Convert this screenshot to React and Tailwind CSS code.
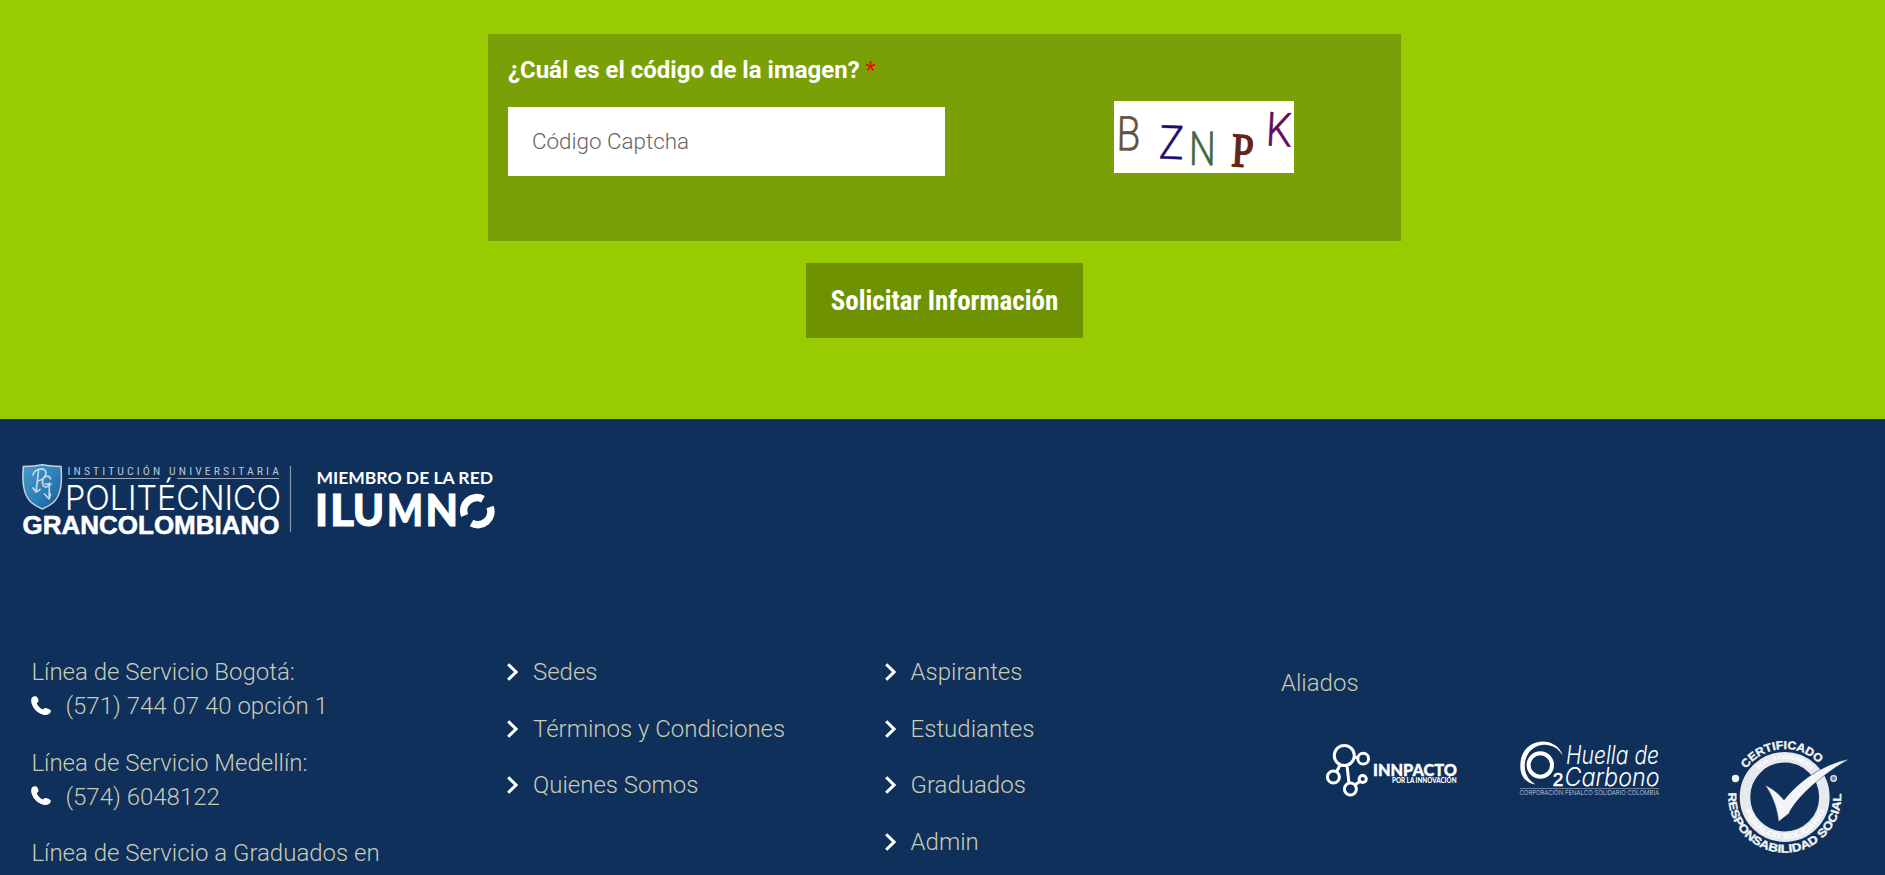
const serviceLines = [
  { title: "Línea de Servicio Bogotá:", phone: "(571) 744 07 40 opción 1" },
  { title: "Línea de Servicio Medellín:", phone: "(574) 6048122" },
  { title: "Línea de Servicio a Graduados en" },
];

const siteLinks = ["Sedes", "Términos y Condiciones", "Quienes Somos"];
const audienceLinks = ["Aspirantes", "Estudiantes", "Graduados", "Admin"];

function PhoneIcon() {
  return (
    <svg className="h-[19px] w-5 shrink-0 -translate-y-px overflow-visible" viewBox="0 0 20 19" fill="#fff">
      <path d="M1 1.500C2.500.2 5-.3 6 1c1.200 1.600 1.800 3.500 1.400 4.500C7 6.300 5.600 6.500 6 7.800c.8 2.200 3.300 4.800 5.500 5.500 1.100.4 1.300-1 2.500-1.300 1.500-.3 4.500.9 5.700 2.300.6 1.500-.9 3.500-2.700 4.300C13 20 7 17.500 3.500 13 .5 9-.8 4 1 1.500Z" />
    </svg>
  );
}

function Chevron() {
  return (
    <svg className="h-[18px] w-[11px] shrink-0" viewBox="0 0 11 18" fill="none" stroke="#fff" strokeWidth="3">
      <path d="M1.2 1.3 9 9l-7.800 7.700" />
    </svg>
  );
}

function LinkList({ items }) {
  return (
    <ul className="flex flex-col gap-[22.6px]">
      {items.map((item) => (
        <li key={item} className="flex h-[34px] items-center gap-[15px] leading-[34px]">
          <Chevron />
          <a href="#" className="whitespace-nowrap">{item}</a>
        </li>
      ))}
    </ul>
  );
}

function Captcha() {
  return (
    <svg className="h-[72px] w-[180px] bg-white" viewBox="0 0 180 72" fontFamily="Roboto, sans-serif">
      <text x="2.500" y="49.500" fontSize="48" fontWeight="300" fill="#5f5343" stroke="#5f5343" strokeWidth=".5" textLength="24" lengthAdjust="spacingAndGlyphs" transform="rotate(1 14 32)">B</text>
      <text x="45" y="58" fontSize="47" fontWeight="300" fill="#1b1070" stroke="#1b1070" strokeWidth=".5" textLength="25" lengthAdjust="spacingAndGlyphs" transform="rotate(2 57 41)">Z</text>
      <text x="75" y="64" fontSize="47" fontWeight="300" fill="#42663f" stroke="#42663f" strokeWidth=".5" textLength="27" lengthAdjust="spacingAndGlyphs" transform="rotate(.5 88 47)">N</text>
      <text x="117.500" y="65.500" fontSize="48" fontWeight="400" fill="#652619" fontFamily="Liberation Serif, serif" stroke="#652619" strokeWidth="1.600" strokeLinejoin="round" textLength="22" lengthAdjust="spacingAndGlyphs" transform="rotate(3 128 50)">P</text>
      <text x="152" y="45" fontSize="47" fontWeight="300" fill="#600c5e" stroke="#600c5e" strokeWidth=".6" textLength="26" lengthAdjust="spacingAndGlyphs" transform="rotate(3 165 28)">K</text>
    </svg>
  );
}

function InstitutionLogo() {
  return (
    <svg className="h-[80px] w-[480px]" viewBox="20 460 480 80" fill="#fff">
      <defs>
        <linearGradient id="shield" x1="0" y1="0" x2="1" y2="1">
          <stop offset="0" stopColor="#4799cc" />
          <stop offset=".5" stopColor="#2f83ba" />
          <stop offset="1" stopColor="#135b96" />
        </linearGradient>
      </defs>
      <path d="M23.300 466.500c7 0 14-.7 19-1.800 5 1.100 12 1.800 18.700 1.800 1 14 1 28-7.700 36-4 3.500-8 5-11 6.500-3-1.500-7-3-11-6.500-8.700-8-9-22-8-36Z" fill="url(#shield)" stroke="#c8d2dc" strokeWidth="1.500" />
      <g fill="none" stroke="#c3d8e6" strokeWidth="1.700" strokeLinecap="round" strokeLinejoin="round">
        <path d="M33 475c1-6 13-9 13-2 0 4-4 7-8 8M38.500 471l-2.500 21-3-4M36 492l4-2.500M50.500 479c-1-5-8-3-8 3s5 7 7 1l-.5 16-4.500-5M45 484h6M49 499l1.500-5" />
      </g>
      <text x="67.500" y="474.500" fontFamily="'Roboto Condensed', Roboto, sans-serif" fontWeight="400" fontSize="11.700" fill="#b8c4d2" textLength="211.500" lengthAdjust="spacing">INSTITUCIÓN UNIVERSITARIA</text>
      <path d="M68.500 478.500H159.500M177 478.500H279" stroke="#98a8bc" strokeWidth="1" />
      <text x="65" y="509.700" fontFamily="Inter, sans-serif" fontWeight="300" fontSize="34.500" textLength="216" lengthAdjust="spacingAndGlyphs">POLITÉCNICO</text>
      <text x="22.500" y="534.300" fontFamily="Liberation Sans, sans-serif" fontWeight="700" fontSize="26.500" stroke="#fff" strokeWidth=".6" textLength="257" lengthAdjust="spacingAndGlyphs">GRANCOLOMBIANO</text>
      <path d="M290.500 466V532" stroke="#8797ae" strokeWidth="1.200" />
      <text x="316.500" y="483.600" fontFamily="Lato, sans-serif" fontWeight="700" fontSize="16.300" textLength="176.500" lengthAdjust="spacingAndGlyphs">MIEMBRO DE LA RED</text>
      <g fontFamily="Lato, sans-serif" fontWeight="900" fontSize="43" stroke="#fff" strokeWidth="1">
        <text x="315" y="526.300">I</text>
        <text x="330" y="526.300" textLength="24" lengthAdjust="spacingAndGlyphs">L</text>
        <text x="352.800" y="526.300" textLength="31.400" lengthAdjust="spacingAndGlyphs">U</text>
        <text x="387" y="526.300" textLength="36" lengthAdjust="spacingAndGlyphs">M</text>
        <text x="425.500" y="526.300" textLength="32.500" lengthAdjust="spacingAndGlyphs">N</text>
      </g>
      <g fill="none" stroke="#fff" strokeWidth="7.500">
        <path d="M464.700 515.500A13 13 0 0 1 483 499.200" />
        <path d="M490 507A13 13 0 0 1 471.500 523" />
      </g>
    </svg>
  );
}

function InnpactoLogo() {
  return (
    <svg className="h-[54px] w-[133px]" viewBox="1326 743 133 54" fill="#fff" fontFamily="Lato, sans-serif">
      <g fill="none" stroke="#fff" strokeWidth="3">
        <circle cx="1344.300" cy="755.500" r="10" />
        <circle cx="1363.200" cy="758.700" r="5.400" />
        <circle cx="1333.400" cy="777" r="6" />
        <circle cx="1350.400" cy="789" r="6" />
        <circle cx="1362.700" cy="779" r="3.600" />
        <path d="M1354 757.500h4M1340 765l-3.500 7M1347 765.500l2 18M1355 785l5-3.700" />
      </g>
      <text x="1373" y="776.300" fontSize="17.500" fontWeight="900" stroke="#fff" strokeWidth=".4" textLength="84" lengthAdjust="spacingAndGlyphs">INNPACTO</text>
      <text x="1392" y="783" fontSize="6.700" fontWeight="900" textLength="64.500" lengthAdjust="spacingAndGlyphs">POR LA INNOVACIÓN</text>
    </svg>
  );
}

function CarbonLogo() {
  return (
    <svg className="h-[60px] w-[141px]" viewBox="1519 738 141 60" fill="#fff" fontFamily="Inter, sans-serif">
      <path d="M1562.700 755.300C1556 736 1526 737 1521 759C1518 775 1525 783 1535.500 784.500C1527 779 1523 771 1525.500 760C1530 742 1553 739 1562.700 755.300Z" />
      <circle cx="1540.300" cy="765" r="11.700" fill="none" stroke="#fff" strokeWidth="4" />
      <text x="1552.800" y="786" fontSize="19" fontFamily="Liberation Sans, sans-serif" stroke="#fff" strokeWidth=".6">2</text>
      <text x="1566" y="764.300" fontSize="25" fontStyle="italic" fontWeight="300" textLength="93" lengthAdjust="spacingAndGlyphs">Huella de</text>
      <text x="1564.500" y="785.700" fontSize="25" fontStyle="italic" fontWeight="300" textLength="95" lengthAdjust="spacingAndGlyphs">Carbono</text>
      <path d="M1520 788.500H1659" stroke="#8293ac" strokeWidth=".8" />
      <text x="1519.500" y="795.300" fontSize="6.600" fill="#d3dae3" textLength="139.500" lengthAdjust="spacingAndGlyphs">CORPORACIÓN FENALCO SOLIDARIO COLOMBIA</text>
    </svg>
  );
}

function CertificateSeal() {
  return (
    <svg className="h-[112px] w-[124px]" viewBox="1727 741 124 112" fill="#f2f4f6" fontFamily="Liberation Sans, sans-serif" fontWeight="700">
      <defs>
        <path id="seal-top" d="M1737.200 796.500a47.500 47.500 0 0 1 95 0" />
        <path id="seal-bottom" d="M1728.600 791.600a56.300 56.300 0 1 0 112.200 0" />
        <path id="ring-bottom" d="M1742.700 797a42 42 0 0 0 84 0" />
        <path id="ring-top" d="M1747.700 796a37 37 0 0 1 74 0" />
      </defs>
      <circle cx="1784.700" cy="797" r="39.700" fill="none" stroke="#e6e9ed" strokeWidth="10.500" />
      <text fontSize="11.500" stroke="#f2f4f6" strokeWidth=".4"><textPath href="#seal-top" startOffset="29.500" textLength="83" lengthAdjust="spacingAndGlyphs">CERTIFICADO</textPath></text>
      <text fontSize="11.500" stroke="#f2f4f6" strokeWidth=".4"><textPath href="#seal-bottom" startOffset="1" textLength="183" lengthAdjust="spacingAndGlyphs">RESPONSABILIDAD SOCIAL</textPath></text>
      <text fontSize="8" fill="#fff"><textPath href="#ring-bottom" startOffset="14" textLength="104" lengthAdjust="spacingAndGlyphs">FENALCO SOLIDARIO</textPath></text>
      <text fontSize="6" fill="#fff"><textPath href="#ring-top" startOffset="29" textLength="58">POR LA COMUNIDAD</textPath></text>
      <circle cx="1735.500" cy="778.500" r="3.700" />
      <circle cx="1833.600" cy="778.500" r="2.800" fill="#718198" stroke="#e6e9ed" strokeWidth="1.300" />
      <path d="M1765 785C1773 788.500 1780 795 1784 800C1799 781 1823 764 1849.500 759C1822 774 1795 799 1789 813.500L1778.500 821.700C1777.500 808 1771.500 793.500 1765 785Z" stroke="#0f305b" strokeWidth=".5" />
    </svg>
  );
}

export default function App() {
  return (
    <div className="flex h-[875px] w-full flex-col overflow-hidden font-[Roboto,sans-serif]">
      <section className="flex h-[419px] shrink-0 flex-col items-center bg-[#99cc00] pt-[34px] pl-[4px]">
        <div className="flex h-[207px] w-[913px] bg-[#7aa007] pl-5">
          <div className="w-[437px]">
            <label htmlFor="captcha" className="mt-[18px] block text-2xl leading-9 font-bold whitespace-nowrap text-white">
              ¿Cuál es el código de la imagen? <span className="font-normal text-[#ff0000]">*</span>
            </label>
            <input
              id="captcha"
              placeholder="Código Captcha"
              className="mt-[19px] block h-[69px] w-[437px] bg-white px-6 pb-[2px] text-[22.4px] font-light outline-none placeholder:text-[#666]"
            />
          </div>
          <div className="mt-[67px] ml-[169px]">
            <Captcha />
          </div>
        </div>
        <button className="mt-[22px] h-[75px] w-[277px] bg-[#6f9300] pt-px text-[27px] font-bold text-white [font-family:'Roboto_Condensed',Roboto,sans-serif] [font-stretch:75%]">
          Solicitar Información
        </button>
      </section>

      <footer className="grow bg-[#0f305b] text-2xl font-light text-[#c9cbb3]">
        <div className="pt-[41px] pl-5">
          <InstitutionLogo />
        </div>
        <div className="mt-[115px] grid grid-cols-[475.600px_377.600px_1fr] pl-[31.400px]">
          <div className="flex flex-col gap-[22.5px]">
            {serviceLines.map((line) => (
              <div key={line.title} className="leading-[34px]">
                <p>{line.title}</p>
                {line.phone && (
                  <p className="flex items-center gap-[14px]">
                    <PhoneIcon />
                    <span>{line.phone}</span>
                  </p>
                )}
              </div>
            ))}
          </div>
          <LinkList items={siteLinks} />
          <div className="flex">
            <div className="w-[396.400px]">
              <LinkList items={audienceLinks} />
            </div>
            <div className="pt-[11px]">
              <h2 className="leading-[34px]">Aliados</h2>
              <div className="mt-[38px] flex items-start pl-[45px]">
                <div className="mt-[5px]">
                  <InnpactoLogo />
                </div>
                <div className="ml-[60px]">
                  <CarbonLogo />
                </div>
                <div className="mt-[3px] ml-[67px]">
                  <CertificateSeal />
                </div>
              </div>
            </div>
          </div>
        </div>
      </footer>
    </div>
  );
}
